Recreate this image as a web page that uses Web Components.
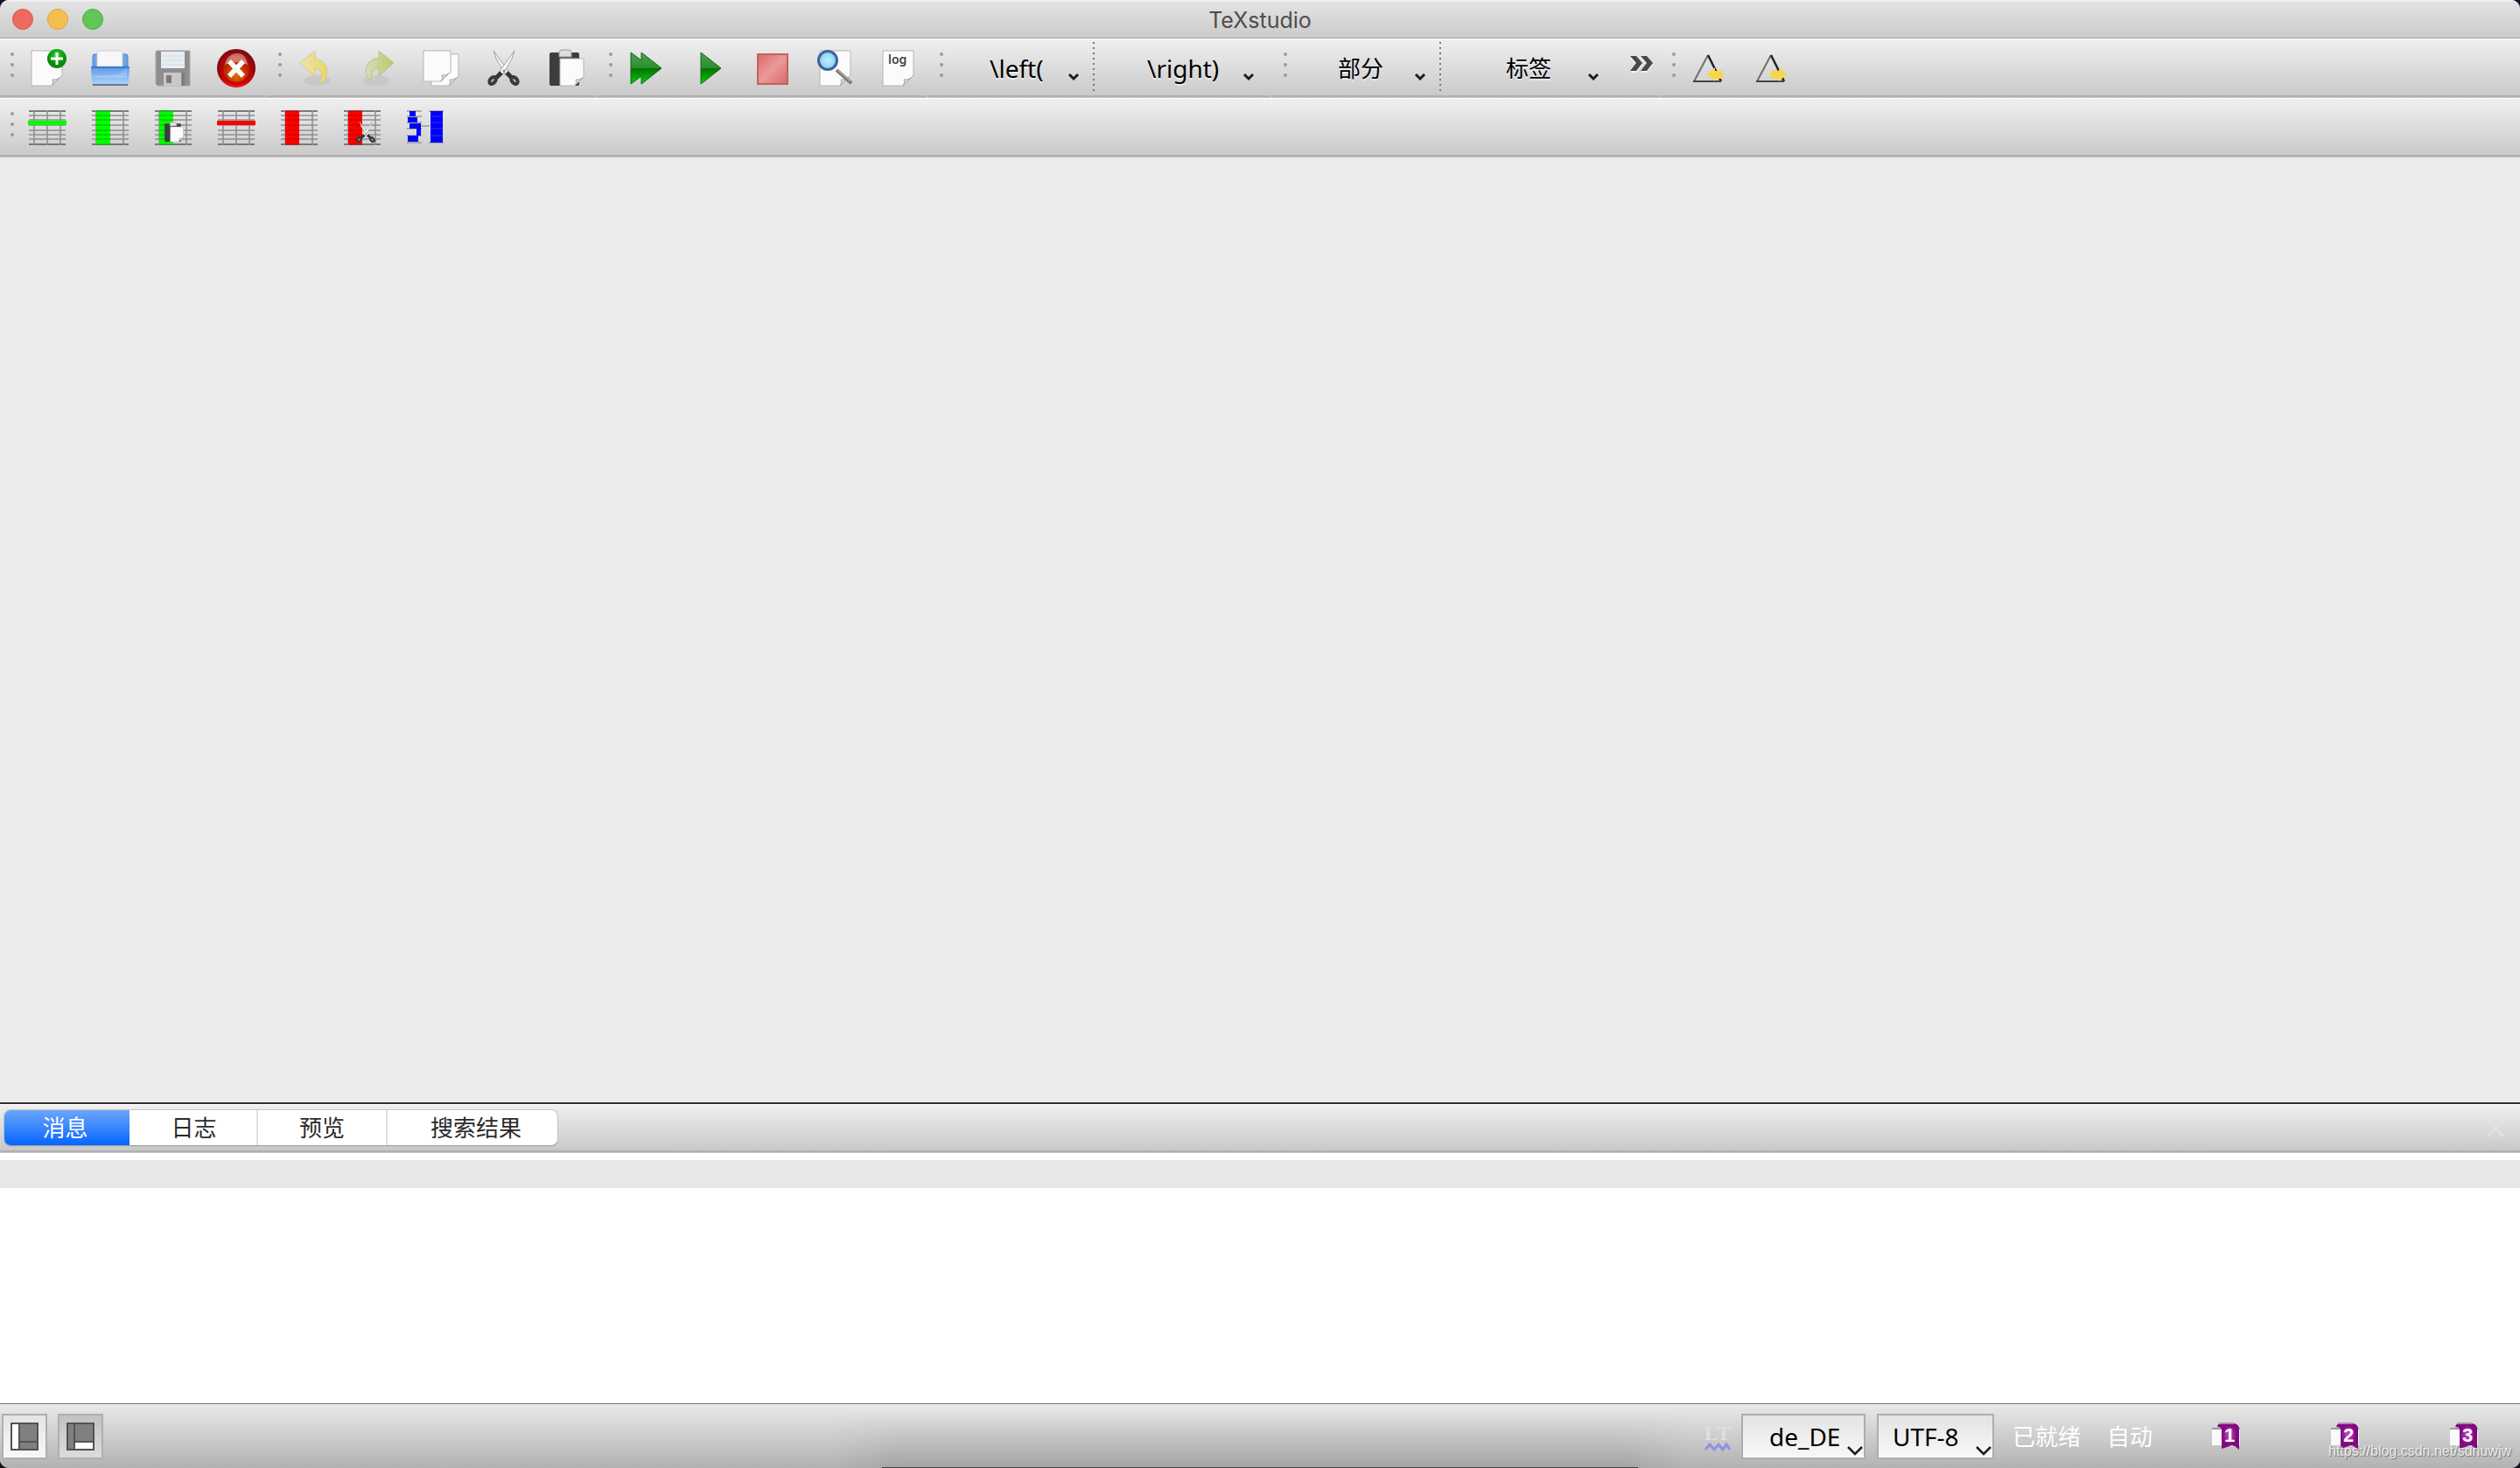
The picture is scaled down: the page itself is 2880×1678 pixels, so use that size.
<!DOCTYPE html>
<html lang="zh-CN">
<head>
<meta charset="utf-8">
<title>TeXstudio</title>
<style>
html, body { margin: 0; height: 100%; }
body { background: #14161f; font-family: "Noto Sans", "Noto Sans CJK SC", sans-serif; font-size: 26px; color: #000; overflow: hidden; }
</style>
</head>
<body>
<tex-window></tex-window>
<script>
const PAGE = (x, y, w, h, f = 9) => `<path d="M${x} ${y}h${w}v${h - f}l-${f} ${f}h-${w - f}z" fill="#fbfbfb" stroke="#b4b4b4"/><path d="M${x + w} ${y + h - f}l-${f} ${f}q3-4 1-7q4 1 8-2z" fill="#ddd" stroke="#a2a2a2"/>`;
const ROWS = [3, 8, 13, 19, 25, 30, 35, 41];
const GRID = (cols) => `<path d="${ROWS.map(y => `M1 ${y}h42`).join('')}" stroke="#8f8f8f" stroke-width="1.6"/><path d="M1 3h42M1 41h42" stroke="#6c6c6c" stroke-width="1.6"/><path d="${cols.map(x => `M${x} 2v40`).join('')}" stroke="#8f8f8f" stroke-width="1.6"/>`;
const COL = (c, d) => `<rect x="6" y="3" width="16" height="38" fill="${c}"/><path d="${ROWS.map(y => `M6 ${y}h16`).join('')}" stroke="${d}" stroke-width="1"/>`;
const SCISSORS = `<path d="M10 2L13 11 24 30l4-3z" fill="#f4f4f4" stroke="#a0a0a0"/><path d="M34 2L31 11 20 30l-4-3z" fill="#fcfcfc" stroke="#a0a0a0"/><path d="M13 33l6-6M31 33l-6-6" stroke="#333" stroke-width="5" fill="none"/><ellipse cx="9" cy="36" rx="3" ry="4.5" transform="rotate(40 9 36)" fill="#bbb" stroke="#3a3a3a" stroke-width="4"/><ellipse cx="34" cy="36" rx="3" ry="4.5" transform="rotate(-40 34 36)" fill="#bbb" stroke="#3a3a3a" stroke-width="4"/><circle cx="22" cy="25" r="1.500" fill="#888"/>`;
const PASTE = `<rect x="2" y="4" width="34" height="38" rx="2" fill="#3d3d3d"/><path d="M13 9V4q0-3 4-3h6q4 0 4 3v5z" fill="#ddd" stroke="#999"/>${PAGE(14, 11, 27, 31, 10)}`;
const WARN = (x) => `<path d="M${x} 37L${x + 16} 7" stroke="#6e6e6e" stroke-width="2"/><path d="M${x + 16} 7L${x + 31} 37" stroke="#222" stroke-width="2.500"/><path d="M${x - 1} 37h32" stroke="#444" stroke-width="2"/>`;
const ICONS = {
  new: `${PAGE(4, 2, 35, 40, 12)}<circle cx="33" cy="11" r="11" fill="url(#green)"/><path d="M33 4v14M26 11h14" stroke="#fff" stroke-width="3"/>`,
  open: `<path d="M2 20V8q0-2 2-2h36q2 0 2 2v12z" fill="#6ea3e6" stroke="#4c84cc"/><path d="M7 20V4q0-2 2-2h25q2 0 2 2v16z" fill="#f7f7f7" stroke="#cfcfcf"/><rect x="2" y="38" width="40" height="4" fill="#6d7683"/><path d="M0 20h44l-1 20H1z" fill="url(#blue)"/><path d="M.5 21h43" stroke="#3b7ccf" stroke-width="2"/><path d="M3 31l28-2 10-7v11H3z" fill="#fff" opacity=".2"/>`,
  save: `<path d="M3 2h38v40H4l-2-2V3z" fill="#8e8e8e" stroke="#aaa"/><rect x="8" y="3" width="27" height="19" fill="#e6edf3"/><path d="M9 8h25M9 13h25M9 18h25" stroke="#d3dbe2"/><rect x="11" y="27" width="20" height="15" fill="#c8c8c8"/><rect x="14" y="30" width="6" height="9" fill="#7c7c7c"/><rect x="32" y="27" width="3" height="15" fill="#7c7c7c"/>`,
  close: `<circle cx="22" cy="22" r="20.500" fill="url(#red)" stroke="url(#rim)" stroke-width="3"/><circle cx="22" cy="23" r="15" fill="url(#ember)"/><path d="M9 18q2-12 13-13t13 13q-13-6-26 0z" fill="#fff" opacity=".4"/><path d="M14 14l16 17M30 14L14 31" stroke="#fff" stroke-width="5.500"/>`,
  undo: `<ellipse cx="25" cy="36" rx="15" ry="6" fill="#bbb" opacity=".45"/><path d="M4.700 16L22 2v9q14 3 14 15q-1 11-9 13q5-9 1-14q-2-3-6-3v9z" fill="url(#yel)" stroke="#d6ca8a"/>`,
  redo: `<ellipse cx="20" cy="36" rx="15" ry="6" fill="#bbb" opacity=".45"/><path d="M40 16L23 2v8Q8 13 8 25q0 7 6 11q-1-14 9-14v9z" fill="url(#lime)" stroke="#b8c48a"/>`,
  copy: PAGE(11, 6, 31, 36, 11) + PAGE(2, 2, 31, 35, 11),
  cut: SCISSORS,
  paste: PASTE,
  build: `<path d="M5 4L17 13V4L40 22 17 40V31L5 40z" fill="url(#play)" stroke="#126512"/>`,
  view: `<path d="M13 4L36 22 13 40z" fill="url(#play)" stroke="#126512"/>`,
  stop: `<rect x="6" y="6" width="34" height="34" fill="url(#pink)" stroke="#c56161" stroke-width="2"/>`,
  find: `${PAGE(5, 2, 35, 40, 12)}<path d="M24 24L41 39" stroke="#777" stroke-width="4"/><path d="M25 24L40 37" stroke="#ccc"/><circle cx="14" cy="13" r="10.500" fill="url(#lens)" stroke="#3f639f" stroke-width="3"/>`,
  log: `${PAGE(5, 2, 35, 40, 12)}<text x="11" y="17" font-family="Noto Sans, sans-serif" font-size="14" font-weight="600" fill="#444">log</text>`,
  addrow: `${GRID([7, 22, 37])}<rect x="0" y="14" width="44" height="5" fill="#0f0"/>`,
  addcol: GRID([6, 37]) + COL('#0f0', '#0a0'),
  pastecol: GRID([6, 37]) + COL('#0f0', '#0a0') + `<g transform="translate(11 15) scale(.55)">${PASTE}</g>`,
  delrow: `${GRID([7, 22, 37])}<rect x="0" y="14" width="44" height="5" fill="#f00"/>`,
  delcol: GRID([6, 37]) + COL('#f00', '#b00'),
  cutcol: GRID([6, 37]) + COL('#f00', '#b00') + `<g transform="translate(13 14) scale(.6)">${SCISSORS}</g>`,
  align: `<path d="M1 3h17M1 9h17M1 16h17M1 23h17M1 31h17M1 39h17M26 3h17M26 39h17M17 20h10" stroke="#999" stroke-width="1.500"/><path d="M4 3h7v6H4zM2 10h11v6H2zM4 17h13v6H4zM12 23h5v8h-5zM2 31h12v7H2zM28 3h14v36H28z" fill="#00f"/><path d="M28 9h14M28 16h14M28 23h14M28 31h14" stroke="#33c"/>`,
  preverr: `${WARN(5)}<path d="M20 29l9-8v4h9v9h-9v3z" fill="#f8d648"/>`,
  nexterr: `${WARN(5)}<path d="M39 29l-9-8v4h-9v9h9v3z" fill="#f8d648"/>`
};
const DEFS = `<defs>
<radialGradient id="green" cx=".5" cy=".3"><stop offset="0" stop-color="#5fd05f"/><stop offset=".5" stop-color="#0fab12"/><stop offset="1" stop-color="#0a8a0c"/></radialGradient>
<linearGradient id="blue" x2="0" y2="1"><stop offset="0" stop-color="#5b97e6"/><stop offset="1" stop-color="#a9d0fb"/></linearGradient>
<linearGradient id="red" x2="0" y2="1"><stop offset="0" stop-color="#8f0a10"/><stop offset="1" stop-color="#d00000"/></linearGradient>
<linearGradient id="rim" x2="0" y2="1"><stop offset="0" stop-color="#7d0d12"/><stop offset=".6" stop-color="#8a0a0a"/><stop offset="1" stop-color="#f01010"/></linearGradient>
<radialGradient id="ember" cy=".7"><stop offset="0" stop-color="#e27400"/><stop offset="1" stop-color="#b92000"/></radialGradient>
<linearGradient id="yel"><stop offset="0" stop-color="#ebe3b4"/><stop offset="1" stop-color="#ead964"/></linearGradient>
<linearGradient id="lime"><stop offset="0" stop-color="#d6dfb4"/><stop offset="1" stop-color="#b5cb69"/></linearGradient>
<linearGradient id="play" x2="0" y2="1"><stop offset="0" stop-color="#4fa04f"/><stop offset=".49" stop-color="#2b8f2b"/><stop offset=".51" stop-color="#067006"/><stop offset="1" stop-color="#00d400"/></linearGradient>
<linearGradient id="pink" x2="1" y2="1"><stop offset="0" stop-color="#dc6868"/><stop offset=".5" stop-color="#e99a9a"/><stop offset="1" stop-color="#d96565"/></linearGradient>
<radialGradient id="lens"><stop offset="0" stop-color="#b9f0fc"/><stop offset="1" stop-color="#8ccdf0"/></radialGradient>
</defs>`;

function define(name, render) {
  customElements.define(name, class extends HTMLElement {
    connectedCallback() {
      if (this.shadowRoot) return;
      this.attachShadow({ mode: 'open' }).innerHTML = render(this);
    }
  });
}

define('tool-icon', el => `<style>
:host { display: block; flex: none; }
button { all: unset; display: flex; justify-content: center; width: 72px; height: 44px; }
svg { display: block; width: 44px; height: 44px; overflow: visible; }
</style><button aria-label="${el.getAttribute('name')}"><svg viewBox="0 0 44 44" fill="none">${DEFS}${ICONS[el.getAttribute('name')]}</svg></button>`);

define('tool-group', () => `<style>
:host { display: flex; height: 68px; flex: none; }
.seam { width: 1px; margin: 0 2px 0 -3px; background: linear-gradient(transparent 65px, #cfcfcf 65px); }
.grip { width: 4px; margin: 16px 2px 0 12px; display: flex; flex-direction: column; gap: 8px; }
.grip i { width: 4px; height: 4px; border-radius: 2px; background: #9b9b9b; }
.items { display: flex; align-items: flex-start; padding-top: 12px; }
</style><div class="seam"></div><div class="grip"><i></i><i></i><i></i></div><div class="items"><slot></slot></div>`);

define('tool-bar', () => `<style>
:host { display: flex; box-sizing: border-box; height: 68px; overflow: hidden;
  background: linear-gradient(#fff 0 1px, transparent 1px 65px, #b0b0b0 65px 67px, #c4c4c4 67px), linear-gradient(#f0f0f0, #c8c8c8); }
</style><slot></slot>`);

define('tool-combo', el => `<style>
:host { display: grid; flex: none; height: 44px; width: var(--w); }
:host([latin]) { font-size: 28px; }
select { all: unset; grid-area: 1 / 1; box-sizing: border-box; width: 100%; height: 44px; line-height: 44px; padding-left: var(--pad); text-shadow: 0 2px 1px rgba(255,255,255,.6); white-space: nowrap; }
svg { grid-area: 1 / 1; justify-self: end; width: 14px; height: 10px; margin: 27px var(--end) 0 0; pointer-events: none; }
</style><select aria-label="${el.getAttribute('label')}"><option>${el.getAttribute('value')}</option></select><svg viewBox="0 0 14 10"><path d="M2 2l5 5 5-5" fill="none" stroke="#1c1c1c" stroke-width="3"/></svg>`);

define('dotted-rule', () => `<style>
:host { display: block; flex: none; width: 2px; height: 56px; margin-top: -8px; background: repeating-linear-gradient(#777 0 2px, transparent 2px 6px); }
</style>`);

define('more-tools', () => `<style>
:host { display: block; }
button { all: unset; display: block; width: 54px; }
svg { display: block; width: 28px; height: 22px; margin: 6px 0 0 17px; }
</style><button aria-label="more"><svg viewBox="0 0 28 22"><path d="M1 4h7l7 8-7 9H1l7-9zM13 4h7l7 8-7 9h-7l7-9z" fill="#fff" opacity=".7"/><path d="M1 2h7l7 8-7 9H1l7-9zM13 2h7l7 8-7 9h-7l7-9z" fill="#484848"/></svg></button>`);

define('title-bar', () => `<style>
:host { display: grid; grid-template-columns: 1fr auto 1fr; align-items: center; box-sizing: border-box; height: 44px; border-bottom: 1px solid #9f9f9f; background: linear-gradient(#f2f2f2 0 1px, #e3e3e3 2px, #cbcbcb); }
.lights { display: flex; gap: 16px; padding-left: 14px; }
button { all: unset; box-sizing: border-box; width: 24px; height: 24px; border-radius: 50%; border: 1px solid; }
.r { background: #ee6a5f; border-color: #d75449; } .y { background: #f5bf4f; border-color: #dba33a; } .g { background: #62c656; border-color: #4dab40; }
h1 { margin: 0; font: 400 25px/32px Inter, sans-serif; color: #4d4d4d; padding-top: 3px; }
</style><div class="lights"><button class="r" aria-label="close"></button><button class="y" aria-label="minimise"></button><button class="g" aria-label="zoom"></button></div><h1>TeXstudio</h1>`);

define('message-tabs', () => `<style>
:host { display: block; border-top: 2px solid #303030; background: #fff; }
.bar { display: flex; align-items: flex-start; justify-content: space-between; box-sizing: border-box; height: 56px; padding: 7px 18px 0 5px;
  background: linear-gradient(#fff 0 1px, transparent 1px 53px, #b0b0b0 53px 55px, #c8c8c8 55px), linear-gradient(#f0f0f0, #c6c6c6); }
.tabs { display: flex; height: 40px; border-radius: 7px; background: #fff; box-shadow: 0 1px 1px #999, 0 0 0 1px #c6c6c6; overflow: hidden; }
.tabs button { all: unset; box-sizing: border-box; width: 148px; height: 40px; line-height: 40px; text-align: center; color: #2b2b2b; border-left: 2px solid #e2e2e2; }
.tabs button.wide { width: 196px; padding-left: 8px; }
.tabs button.on { width: 143px; padding-right: 4px; border: 0; color: #fff; background: linear-gradient(#6ca5fb, #0566ff); }
.tabs button.on + button { border-left-color: #fff; width: 145px; }
.x { all: unset; width: 20px; height: 20px; margin-top: 11px; }
.x svg { display: block; width: 20px; height: 20px; }
.pane { height: 286px; box-sizing: border-box; padding-top: 8px; }
.line { height: 32px; background: #e7e7e7; }
</style>
<div class="bar"><div class="tabs" role="tablist"><button role="tab" class="on">消息</button><button role="tab">日志</button><button role="tab">预览</button><button role="tab" class="wide">搜索结果</button></div>
<button class="x" aria-label="close panel"><svg viewBox="0 0 20 20"><path d="M1 1l18 18M19 1L1 19" stroke="#e2e2e2" stroke-width="3"/></svg></button></div>
<div class="pane"><div class="line"></div></div>`);

define('pane-toggle', el => {
  const side = el.hasAttribute('side');
  return `<style>
:host { display: block; flex: none; }
button { all: unset; box-sizing: border-box; display: grid; place-items: center; width: 52px; height: 52px; border: 2px solid #afafaf; background: ${side ? 'linear-gradient(#e4e4e4, #f8f8f8)' : 'linear-gradient(#c2c2c2, #dcdcdc)'}; }
svg { width: 32px; height: 32px; }
</style><button aria-label="toggle panel"><svg viewBox="0 0 32 32"><rect x="1" y="1" width="30" height="30" fill="#808080" stroke="#525252" stroke-width="2"/>${side
  ? '<rect x="2" y="2" width="7" height="28" fill="#fff"/><path d="M10 1v30M10 22h21" stroke="#555" stroke-width="2"/>'
  : '<rect x="10" y="22" width="20" height="8" fill="#fff"/><path d="M9 1v30M10 22h21" stroke="#555" stroke-width="2"/>'}</svg></button>`;
});

define('status-combo', el => `<style>
:host { display: grid; flex: none; box-sizing: border-box; width: var(--w); height: 52px; font-size: 28px; border: 2px solid #adadad; background: linear-gradient(#e4e4e4, #f8f8f8); }
select { all: unset; grid-area: 1 / 1; box-sizing: border-box; width: 100%; height: 48px; line-height: 48px; padding-left: var(--pad); white-space: nowrap; }
svg { grid-area: 1 / 1; justify-self: end; width: 18px; height: 12px; margin: 34px 1px 0 0; pointer-events: none; }
</style><select aria-label="${el.getAttribute('label')}"><option>${el.getAttribute('value')}</option></select><svg viewBox="0 0 18 12"><path d="M1 2l8 8 8-8" fill="none" stroke="#1c1c1c" stroke-width="2.500"/></svg>`);

define('book-mark', el => `<style>
:host { display: block; flex: none; }
button { all: unset; display: block; width: 32px; height: 32px; }
svg { display: block; width: 32px; height: 32px; }
</style><button aria-label="bookmark"><svg viewBox="0 0 32 32"><defs><radialGradient id="glow"><stop offset="0" stop-color="#c850c8"/><stop offset="1" stop-color="#850a85"/></radialGradient></defs><rect x="0" y="6" width="32" height="20" fill="#fff" opacity=".9"/><path d="M0 7h32" stroke="#999" stroke-width="2"/><path d="M6 5q1-4 4-4h15q6 1 6 6v24l-5-4q-4-2-6 0l-9 3V8q0-3-5-3z" fill="#800880"/><ellipse cx="20" cy="14" rx="8" ry="11" fill="url(#glow)"/><path d="M8 1h17" stroke="#b78ab7" stroke-width="2"/><text x="20" y="22" text-anchor="middle" font-family="Liberation Sans, sans-serif" font-weight="700" font-size="22" fill="#fff">${el.getAttribute('n')}</text></svg></button>`);

define('status-bar', () => `<style>
:host { display: flex; align-items: flex-start; justify-content: space-between; box-sizing: border-box; height: 74px; padding: 11px 48px 0 2px; border-top: 1px solid #707070; position: relative;
  background: linear-gradient(#e9e9e9, #d0d0d0 45%, #b2b2b2); }
.shade { position: absolute; left: 33%; right: 33%; bottom: 0; height: 73px; background: linear-gradient(transparent 10%, rgba(90,90,90,.16)); mask: linear-gradient(90deg, transparent, #000 8%, #000 92%, transparent); }
.dock { position: absolute; left: 35%; right: 35%; bottom: 0; height: 1px; background: #444; }
.left { display: flex; gap: 12px; }
.right { display: flex; align-items: center; height: 52px; color: #fff; }
.lt { width: 30px; height: 34px; margin-right: 12px; }
status-combo { color: #000; margin-right: 13px; }
.ready { margin: 0 30px 0 8px; line-height: 52px; }
.auto { margin-right: 68px; line-height: 52px; }
.marks { display: flex; gap: 104px; }
.mark { position: absolute; right: 10px; bottom: 9px; font: 16px/20px "Liberation Sans", sans-serif; color: rgba(255,255,255,.8); text-shadow: 1px 1px 1px rgba(0,0,0,.4); }
</style>
<div class="shade"></div><div class="dock"></div>
<div class="left"><pane-toggle side></pane-toggle><pane-toggle></pane-toggle></div>
<div class="right">
<svg class="lt" viewBox="0 0 30 34"><text x="0" y="21" font-family="Liberation Serif, serif" font-weight="700" font-size="24" fill="#e0e0e0">LT</text><path d="M1 32l5-6 5 6 5-6 5 6 4-6 4 6" fill="none" stroke="#9290e6" stroke-width="3"/></svg>
<status-combo label="language" value="de_DE" style="--w:142px;--pad:30px"></status-combo>
<status-combo label="encoding" value="UTF-8" style="--w:134px;--pad:16px"></status-combo>
<span class="ready">已就绪</span><span class="auto">自动</span>
<div class="marks"><book-mark n="1"></book-mark><book-mark n="2"></book-mark><book-mark n="3"></book-mark></div>
</div>
<div class="mark">https://blog.csdn.net/sdnuwjw</div>`);

const tools = (...names) => names.map(n => `<tool-icon name="${n}"></tool-icon>`).join('');
define('tex-window', () => `<style>
:host { display: flex; flex-direction: column; height: 100vh; border-radius: 10px; overflow: hidden; background: #ebebeb; }
main { flex: 1; min-height: 0; }
</style>
<title-bar></title-bar>
<tool-bar>
<tool-group>${tools('new', 'open', 'save', 'close')}</tool-group>
<tool-group>${tools('undo', 'redo', 'copy', 'cut', 'paste')}</tool-group>
<tool-group>${tools('build', 'view', 'stop', 'find', 'log')}</tool-group>
<tool-group><tool-combo latin label="left" value="\\left(" style="--w:169px;--pad:51px;--end:15px"></tool-combo><dotted-rule></dotted-rule><tool-combo latin label="right" value="\\right)" style="--w:204px;--pad:60px;--end:21px"></tool-combo></tool-group>
<tool-group><tool-combo label="section" value="部分" style="--w:172px;--pad:56px;--end:15px"></tool-combo><dotted-rule></dotted-rule><tool-combo label="label" value="标签" style="--w:198px;--pad:74px;--end:17px"></tool-combo><more-tools></more-tools></tool-group>
<tool-group>${tools('preverr', 'nexterr')}</tool-group>
</tool-bar>
<tool-bar><tool-group>${tools('addrow', 'addcol', 'pastecol', 'delrow', 'delcol', 'cutcol', 'align')}</tool-group></tool-bar>
<main></main>
<message-tabs></message-tabs>
<status-bar></status-bar>`);
</script>
</body>
</html>
